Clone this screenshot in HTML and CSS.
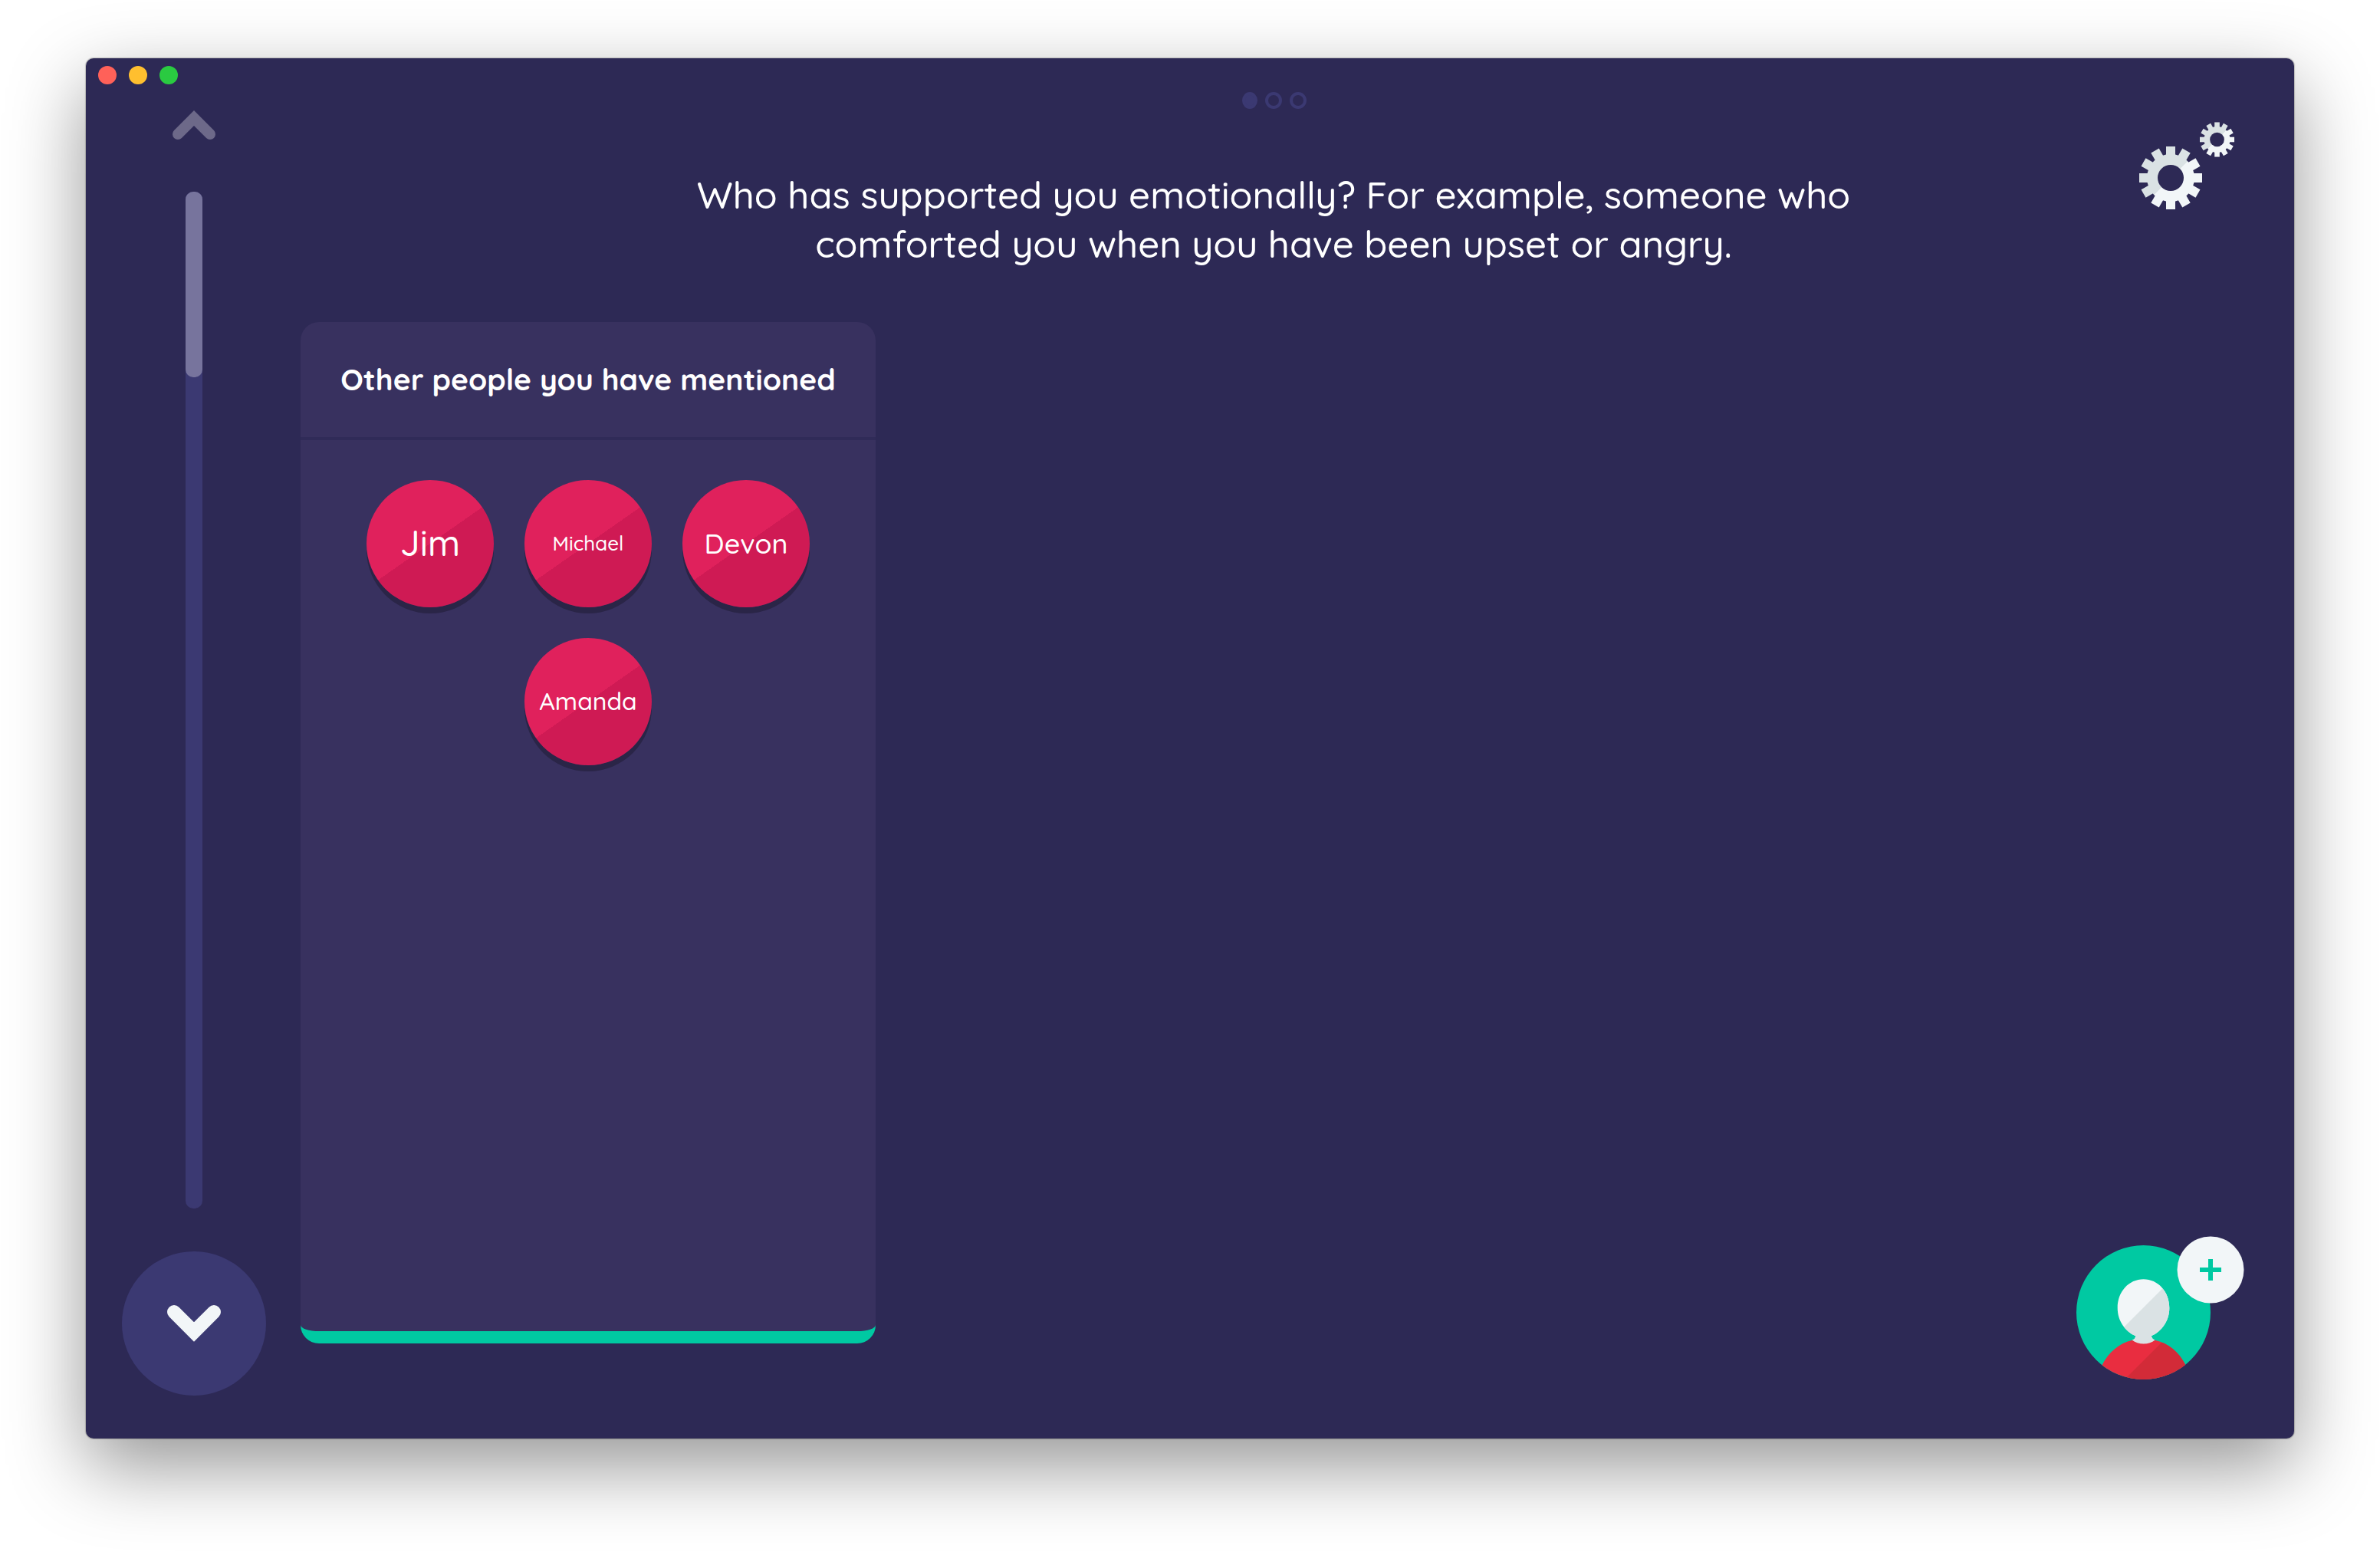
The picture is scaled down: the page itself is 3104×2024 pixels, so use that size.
FILE: index.html
```html
<!DOCTYPE html>
<html lang="en">
<head>
<meta charset="utf-8">
<title>Interview</title>
<link rel="stylesheet" href="styles.css">
</head>
<body>
<div class="window">
  <div class="titlebar">
    <button class="light light-close" type="button" aria-label="Close"></button>
    <button class="light light-minimize" type="button" aria-label="Minimize"></button>
    <button class="light light-zoom" type="button" aria-label="Zoom"></button>
  </div>
  <div class="stage">
    <nav class="timeline" aria-label="Interview progress">
      <button class="back" type="button" aria-label="Back">
        <svg width="56" height="38" viewBox="0 0 56 38"><path d="M7 31 28 10 49 31"/></svg>
      </button>
      <div class="track" role="progressbar" aria-label="Progress" aria-valuenow="18">
        <div class="track-fill" style="height: 18.25%"></div>
      </div>
      <button class="next" type="button" aria-label="Next">
        <svg width="70" height="48" viewBox="0 0 70 48"><path d="M9 9 35 35 61 9"/></svg>
      </button>
    </nav>
    <main class="main">
      <header class="header">
        <div class="prompt">
          <div class="pips">
            <span class="pip pip-active"></span>
            <span class="pip"></span>
            <span class="pip"></span>
          </div>
          <h1 class="question">Who has supported you emotionally? For example, someone who comforted you when you have been upset or angry.</h1>
        </div>
        <button class="settings" type="button" aria-label="Settings">
          <svg width="124" height="114" viewBox="0 0 124 114">
            <defs>
              <linearGradient id="shade" x1="0" y1="0" x2="1" y2="1">
                <stop offset="0.5" stop-color="#dae2e4"/>
                <stop offset="0.5" stop-color="#f2f6f8"/>
              </linearGradient>
              <mask id="gear" maskUnits="userSpaceOnUse" x="-42" y="-42" width="84" height="84">
                <g fill="#fff">
                  <circle r="31"/>
                  <rect x="-6" y="-41" width="12" height="82"/>
                  <rect x="-6" y="-41" width="12" height="82" transform="rotate(30)"/>
                  <rect x="-6" y="-41" width="12" height="82" transform="rotate(60)"/>
                  <rect x="-6" y="-41" width="12" height="82" transform="rotate(90)"/>
                  <rect x="-6" y="-41" width="12" height="82" transform="rotate(120)"/>
                  <rect x="-6" y="-41" width="12" height="82" transform="rotate(150)"/>
                </g>
                <circle r="17" fill="#000"/>
              </mask>
            </defs>
            <g transform="translate(41 73)"><rect x="-42" y="-42" width="84" height="84" fill="url(#shade)" mask="url(#gear)"/></g>
            <g transform="translate(101.5 23) scale(0.55)"><rect x="-42" y="-42" width="84" height="84" fill="url(#shade)" mask="url(#gear)"/></g>
          </svg>
        </button>
      </header>
      <div class="content">
        <section class="panel">
          <h2 class="panel-title">Other people you have mentioned</h2>
          <ul class="nodes">
            <li class="node name-xl">Jim</li>
            <li class="node name-s">Michael</li>
            <li class="node name-l">Devon</li>
            <li class="node name-m">Amanda</li>
          </ul>
        </section>
        <button class="add" type="button" aria-label="Add a person">
          <svg width="219" height="187" viewBox="0 0 219 187">
            <defs>
              <clipPath id="disc"><circle cx="87.5" cy="99.5" r="87.5"/></clipPath>
              <clipPath id="head"><path d="M87.500 56.300C106.500 56.300 121.300 72.500 121.300 93.700C121.300 110 112 124 97.700 130.300C98.500 133 100 134.800 102.300 135.700L100 145H75L73 135.700C75.500 134.800 77 133 77.300 130.300C63 124 53.700 110 53.700 93.700C53.700 72.500 68.500 56.300 87.500 56.300Z"/></clipPath>
              <clipPath id="torso"><path d="M33.700 168C42 151.500 56 139.500 73 135.700C80 142 95.500 142 102.300 135.700C120 139.500 134 151.500 142 167.500V190H33Z"/></clipPath>
            </defs>
            <circle cx="87.500" cy="99.500" r="87.500" fill="#00c9a2"/>
            <g clip-path="url(#head)">
              <rect x="50" y="50" width="75" height="95" fill="#f2f6f8"/>
              <path d="M130.700 50V145H35.700Z" fill="#dae2e4"/>
            </g>
            <g clip-path="url(#disc)">
              <g clip-path="url(#torso)">
                <rect x="30" y="130" width="116" height="60" fill="#e92d40"/>
                <path d="M120 130H150V190H60Z" fill="#d22b38"/>
              </g>
            </g>
            <circle cx="175" cy="44" r="43.500" fill="#f2f6f8"/>
            <path d="M161 44H189M175 30V58" stroke="#00c9a2" stroke-width="6"/>
          </svg>
        </button>
      </div>
    </main>
  </div>
</div>
</body>
</html>
```
FILE: styles.css
```css
* {
  box-sizing: border-box;
}

body {
  display: flex;
  min-height: 100vh;
  margin: 0;
  padding: 76px 112px 148px;
  background: #fff;
  color: #fff;
  font-family: Quicksand, Lato, sans-serif;
  font-weight: 500;
}

button {
  padding: 0;
  border: 0;
  background: none;
  cursor: pointer;
}

svg {
  display: block;
}

.window {
  display: flex;
  flex: 1;
  flex-direction: column;
  border-radius: 10px;
  background: #2d2955;
  box-shadow: 0 0 1px 1px rgba(0, 0, 0, 0.2), 0 36px 100px rgba(0, 0, 0, 0.42);
}

.titlebar {
  display: flex;
  gap: 16px;
  height: 44px;
  padding: 10px 16px;
}

.light {
  width: 24px;
  height: 24px;
  border-radius: 50%;
}

.light-close {
  background: #ff6159;
}

.light-minimize {
  background: #ffbf2f;
}

.light-zoom {
  background: #2aca41;
}

.stage {
  display: flex;
  flex: 1;
}

.timeline {
  display: flex;
  flex-direction: column;
  align-items: center;
  width: 280px;
  padding: 24px 45px 56px 47px;
}

.timeline path {
  fill: none;
  stroke-linecap: round;
}

.back path {
  stroke: #6d6989;
  stroke-width: 14px;
}

.track {
  flex: 1;
  width: 22px;
  margin: 68px 0 56px;
  border-radius: 10px;
  background: #3b3972;
}

.track-fill {
  border-radius: 10px;
  background: #77749d;
}

.next {
  display: grid;
  place-items: center;
  width: 188px;
  height: 188px;
  border-radius: 50%;
  background: #3b3972;
}

.next path {
  stroke: #f2f6f8;
  stroke-width: 18px;
}

.main {
  display: flex;
  flex: 1;
  flex-direction: column;
  padding: 0 62px 77px 0;
}

.header {
  display: grid;
  grid-template-columns: 140px 1fr 140px;
  align-items: start;
}

.prompt {
  grid-column: 2;
}

.pips {
  display: flex;
  align-items: center;
  justify-content: center;
  gap: 10px;
  padding-left: 2px;
}

.pip {
  width: 22px;
  height: 22px;
  border: 4px solid #3b3972;
  border-radius: 50%;
}

.pip-active {
  width: 20px;
  background: #3b3972;
}

.question {
  max-width: 1600px;
  margin: 80px auto 70px;
  font-size: 49px;
  font-weight: 500;
  line-height: 64px;
  text-align: center;
}

.settings {
  margin-top: 39px;
}

.content {
  display: flex;
  flex: 1;
  align-items: flex-end;
  justify-content: space-between;
}

.panel {
  align-self: stretch;
  width: 750px;
  margin-bottom: 47px;
  border-bottom: 16px solid #00c9a2;
  border-radius: 24px;
  background: #38315f;
}

.panel-title {
  margin: 0;
  padding: 51px 20px;
  border-bottom: 4px solid #302b58;
  font-size: 39px;
  font-weight: 700;
  line-height: 48px;
  text-align: center;
}

.nodes {
  display: flex;
  flex-wrap: wrap;
  justify-content: center;
  gap: 40px;
  margin: 0;
  padding: 52px 60px;
  list-style: none;
}

.node {
  display: grid;
  place-items: center;
  width: 166px;
  height: 166px;
  padding-bottom: 2px;
  border-radius: 50%;
  background: linear-gradient(145deg, #e0215c 50%, #cf1a54 50%);
  box-shadow: 0 8px #2a2547;
}

.name-s {
  font-size: 26px;
}

.name-m {
  font-size: 32px;
}

.name-l {
  font-size: 36px;
}

.name-xl {
  font-size: 46px;
}

.add {
  margin-right: 3px;
}
```
